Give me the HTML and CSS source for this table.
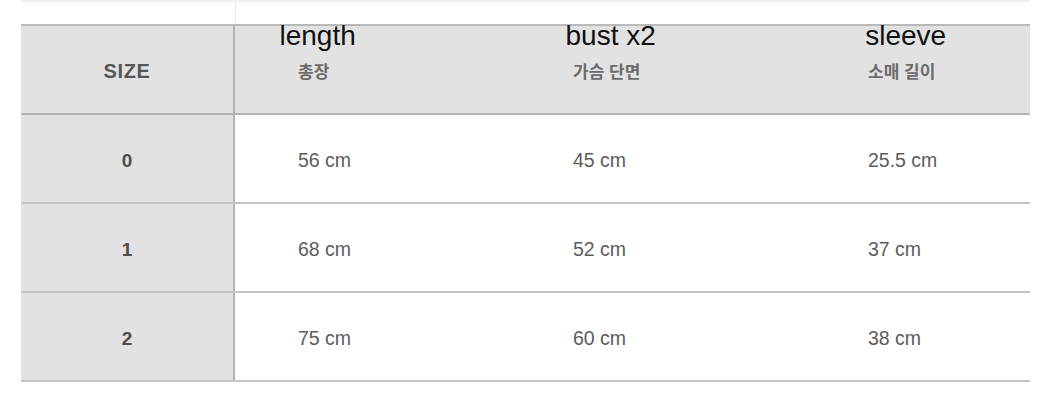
FILE: index.html
```html
<!DOCTYPE html>
<html lang="ko">
<head>
<meta charset="utf-8">
<title>Size chart</title>
<link rel="stylesheet" href="styles.css">
</head>
<body>
<div class="sheet">
  <div class="prev">
    <div class="prev-size"></div>
  </div>
  <div class="table">
    <div class="row head">
      <div class="cell size"><span class="size-label">SIZE</span></div>
      <div class="cell data">
        <div class="label"><div class="en"><span>length</span></div><div class="ko">총장</div></div>
      </div>
      <div class="cell data">
        <div class="label"><div class="en"><span>bust x2</span></div><div class="ko">가슴 단면</div></div>
      </div>
      <div class="cell data">
        <div class="label"><div class="en"><span>sleeve</span></div><div class="ko">소매 길이</div></div>
      </div>
    </div>
    <div class="row">
      <div class="cell size"><span class="num">0</span></div>
      <div class="cell data val">56 cm</div>
      <div class="cell data val">45 cm</div>
      <div class="cell data val">25.5 cm</div>
    </div>
    <div class="row">
      <div class="cell size"><span class="num">1</span></div>
      <div class="cell data val">68 cm</div>
      <div class="cell data val">52 cm</div>
      <div class="cell data val">37 cm</div>
    </div>
    <div class="row">
      <div class="cell size"><span class="num">2</span></div>
      <div class="cell data val">75 cm</div>
      <div class="cell data val">60 cm</div>
      <div class="cell data val">38 cm</div>
    </div>
  </div>
</div>
</body>
</html>
```

FILE: styles.css
```css
html, body {
  margin: 0;
  padding: 0;
  background: #ffffff;
}

body {
  font-family: "Liberation Sans", Arial, "Noto Sans CJK KR", sans-serif;
  width: 1054px;
  height: 414px;
  overflow: hidden;
}

.sheet {
  margin-left: 21px;
  width: 1009px;
}

.prev {
  height: 22px;
  border-top: 2px solid #efefef;
  display: flex;
}

.prev-size {
  width: 214px;
  border-right: 1px solid #ececec;
}

.table {
  border-top: 2px solid #b9b9b9;
}

.row {
  display: grid;
  grid-template-columns: 214px 275px 295px 1fr;
  height: 87px;
  border-bottom: 2px solid #c4c4c4;
}

.row.head {
  background: #e2e2e2;
  border-bottom-color: #b4b4b4;
}

.cell {
  display: flex;
  align-items: center;
  box-sizing: border-box;
}

.cell.size {
  background: #e2e2e2;
  border-right: 2px solid #b2b2b2;
  justify-content: center;
  padding-top: 4px;
}

.cell.data {
  padding-left: 63px;
}

.size-label {
  font-weight: bold;
  font-size: 20px;
  letter-spacing: 0.6px;
  color: #555555;
}

.num {
  font-weight: bold;
  font-size: 19px;
  color: #4d4d4d;
}

.val {
  font-size: 19.5px;
  color: #5c5c5c;
  padding-top: 4px;
}

.head .cell.data {
  align-items: flex-start;
}

.label {
  display: inline-block;
  margin-top: -4px;
}

.en {
  width: 0;
  margin-left: calc(50% + 4px);
  display: flex;
  justify-content: center;
  height: 27px;
}

.en span {
  white-space: nowrap;
  font-size: 28px;
  line-height: 27px;
  color: #111111;
}

.ko {
  margin-top: 11px;
  font-family: "Noto Sans CJK KR", sans-serif;
  font-weight: bold;
  font-size: 17px;
  line-height: 21px;
  color: #6b6b6b;
  white-space: nowrap;
}
```
